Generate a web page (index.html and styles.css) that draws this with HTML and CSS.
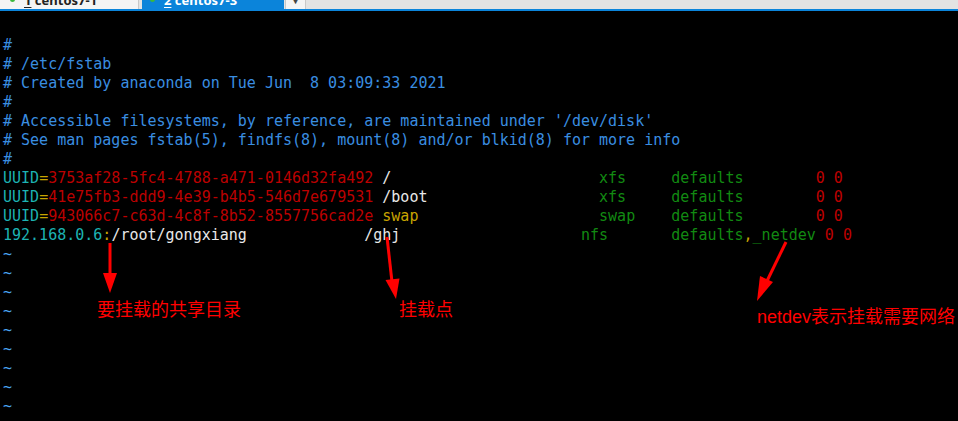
FILE: index.html
```html
<!DOCTYPE html>
<html lang="zh">
<head>
<meta charset="utf-8">
<title>vim /etc/fstab</title>
<link rel="stylesheet" href="styles.css">
</head>
<body>
<div class="tabbar">
  <div class="tab tab-inactive"><div class="tab-label"><span class="dot"></span><span class="num">1</span> centos7-1</div></div>
  <div class="tab tab-active"><div class="tab-label"><span class="dot"></span><span class="num">2</span> centos7-3</div></div>
  <div class="tab-add"><div class="tab-label">▾</div></div>
  <div class="tab-fill"></div>
</div>
<div class="term">
<div class="ln"> </div>
<div class="ln c">#</div>
<div class="ln c"># /etc/fstab</div>
<div class="ln c"># Created by anaconda on Tue Jun  8 03:09:33 2021</div>
<div class="ln c">#</div>
<div class="ln c"># Accessible filesystems, by reference, are maintained under '/dev/disk'</div>
<div class="ln c"># See man pages fstab(5), findfs(8), mount(8) and/or blkid(8) for more info</div>
<div class="ln c">#</div>
<div class="ln"><span class="cy">UUID</span><span class="y">=</span><span class="r">3753af28-5fc4-4788-a471-0146d32fa492</span> <span class="w">/</span>                       <span class="g">xfs</span>     <span class="g">defaults</span>        <span class="r">0 0</span></div>
<div class="ln"><span class="cy">UUID</span><span class="y">=</span><span class="r">41e75fb3-ddd9-4e39-b4b5-546d7e679531</span> <span class="w">/boot</span>                   <span class="g">xfs</span>     <span class="g">defaults</span>        <span class="r">0 0</span></div>
<div class="ln"><span class="cy">UUID</span><span class="y">=</span><span class="r">943066c7-c63d-4c8f-8b52-8557756cad2e</span> <span class="y">swap</span>                    <span class="g">swap</span>    <span class="g">defaults</span>        <span class="r">0 0</span></div>
<div class="ln"><span class="cy">192.168.0.6</span><span class="y">:</span><span class="w">/root/gongxiang</span>             <span class="w">/ghj</span>                    <span class="g">nfs</span>       <span class="g">defaults</span><span class="y">,</span><span class="g">_netdev</span> <span class="r">0 0</span></div>
<div class="ln t">~</div>
<div class="ln t">~</div>
<div class="ln t">~</div>
<div class="ln t">~</div>
<div class="ln t">~</div>
<div class="ln t">~</div>
<div class="ln t">~</div>
<div class="ln t">~</div>
<div class="ln t">~</div>
</div>

<svg class="arrows" width="958" height="421" viewBox="0 0 958 421">
  <g fill="#ff0000" stroke="#ff0000">
    <line x1="110" y1="243" x2="110" y2="276" stroke-width="3"/>
    <polygon points="103,273 117,273 110,293" stroke="none"/>
    <line x1="387" y1="237" x2="392" y2="282" stroke-width="3"/>
    <polygon points="385.5,280 399.5,278.5 396,299" stroke="none"/>
    <line x1="786" y1="242" x2="767" y2="281" stroke-width="3"/>
    <polygon points="760,276 773,282 757,301" stroke="none"/>
  </g>
</svg>
<div class="note note1">要挂载的共享目录</div>
<div class="note note2">挂载点</div>
<div class="note note3">netdev表示挂载需要网络</div>
</body>
</html>
```

FILE: styles.css
```css
html, body {
  margin: 0;
  padding: 0;
}
body {
  width: 958px;
  height: 421px;
  background: #000;
  overflow: hidden;
  position: relative;
}
.tabbar {
  display: flex;
  height: 9px;
  background: #e3e3e3;
  border-bottom: 2px solid #0b84da;
  overflow: hidden;
  font-family: "Noto Sans", "Noto Sans CJK SC", sans-serif;
  font-size: 13px;
  font-weight: bold;
}
.tab {
  box-sizing: border-box;
  height: 9px;
  overflow: hidden;
  white-space: pre;
}
.tab-label {
  line-height: 13px;
  margin-top: -6px;
}
.tab-inactive {
  width: 139px;
  background: #f4f4f4;
  color: #222;
  border-right: 1px solid #c8c8c8;
  margin-right: 3px;
  padding-left: 10px;
}
.tab-active {
  width: 142px;
  background: #0b84da;
  color: #fff;
  padding-left: 8px;
}
.dot {
  display: inline-block;
  width: 5px;
  height: 5px;
  border-radius: 50%;
  background: #3cb83c;
  margin-right: 9px;
  vertical-align: 3px;
}
.num {
  text-decoration: underline;
  text-underline-offset: 2px;
}
.tab-add {
  box-sizing: border-box;
  width: 21px;
  height: 9px;
  margin-left: 1px;
  background: #f4f4f4;
  border-right: 1px solid #c8c8c8;
  border-left: 1px solid #c8c8c8;
  color: #444;
  font-size: 10px;
  text-align: center;
  overflow: hidden;
}
.tab-fill {
  flex: 1;
}
.term {
  padding: 6px 0 0 3px;
  font-family: "DejaVu Sans Mono", monospace;
  font-size: 15px;
  line-height: 19px;
  color: #e6e6e6;
}
.ln {
  white-space: pre;
  height: 19px;
}
.c { color: #3a8ee0; }
.cy { color: #1db3b3; }
.y { color: #c8a400; }
.r { color: #bc0000; }
.g { color: #128a12; }
.w { color: #e8e8e8; }
.t { color: #4aa6f5; }
.arrows {
  position: absolute;
  left: 0;
  top: 0;
  pointer-events: none;
}
.note {
  position: absolute;
  color: #ff0000;
  font-family: "Liberation Sans", "Noto Sans CJK SC", sans-serif;
  font-size: 18px;
  line-height: 20px;
  white-space: nowrap;
}
.note1 { left: 97px; top: 300px; }
.note2 { left: 399px; top: 300px; }
.note3 { left: 757px; top: 307px; }
```
